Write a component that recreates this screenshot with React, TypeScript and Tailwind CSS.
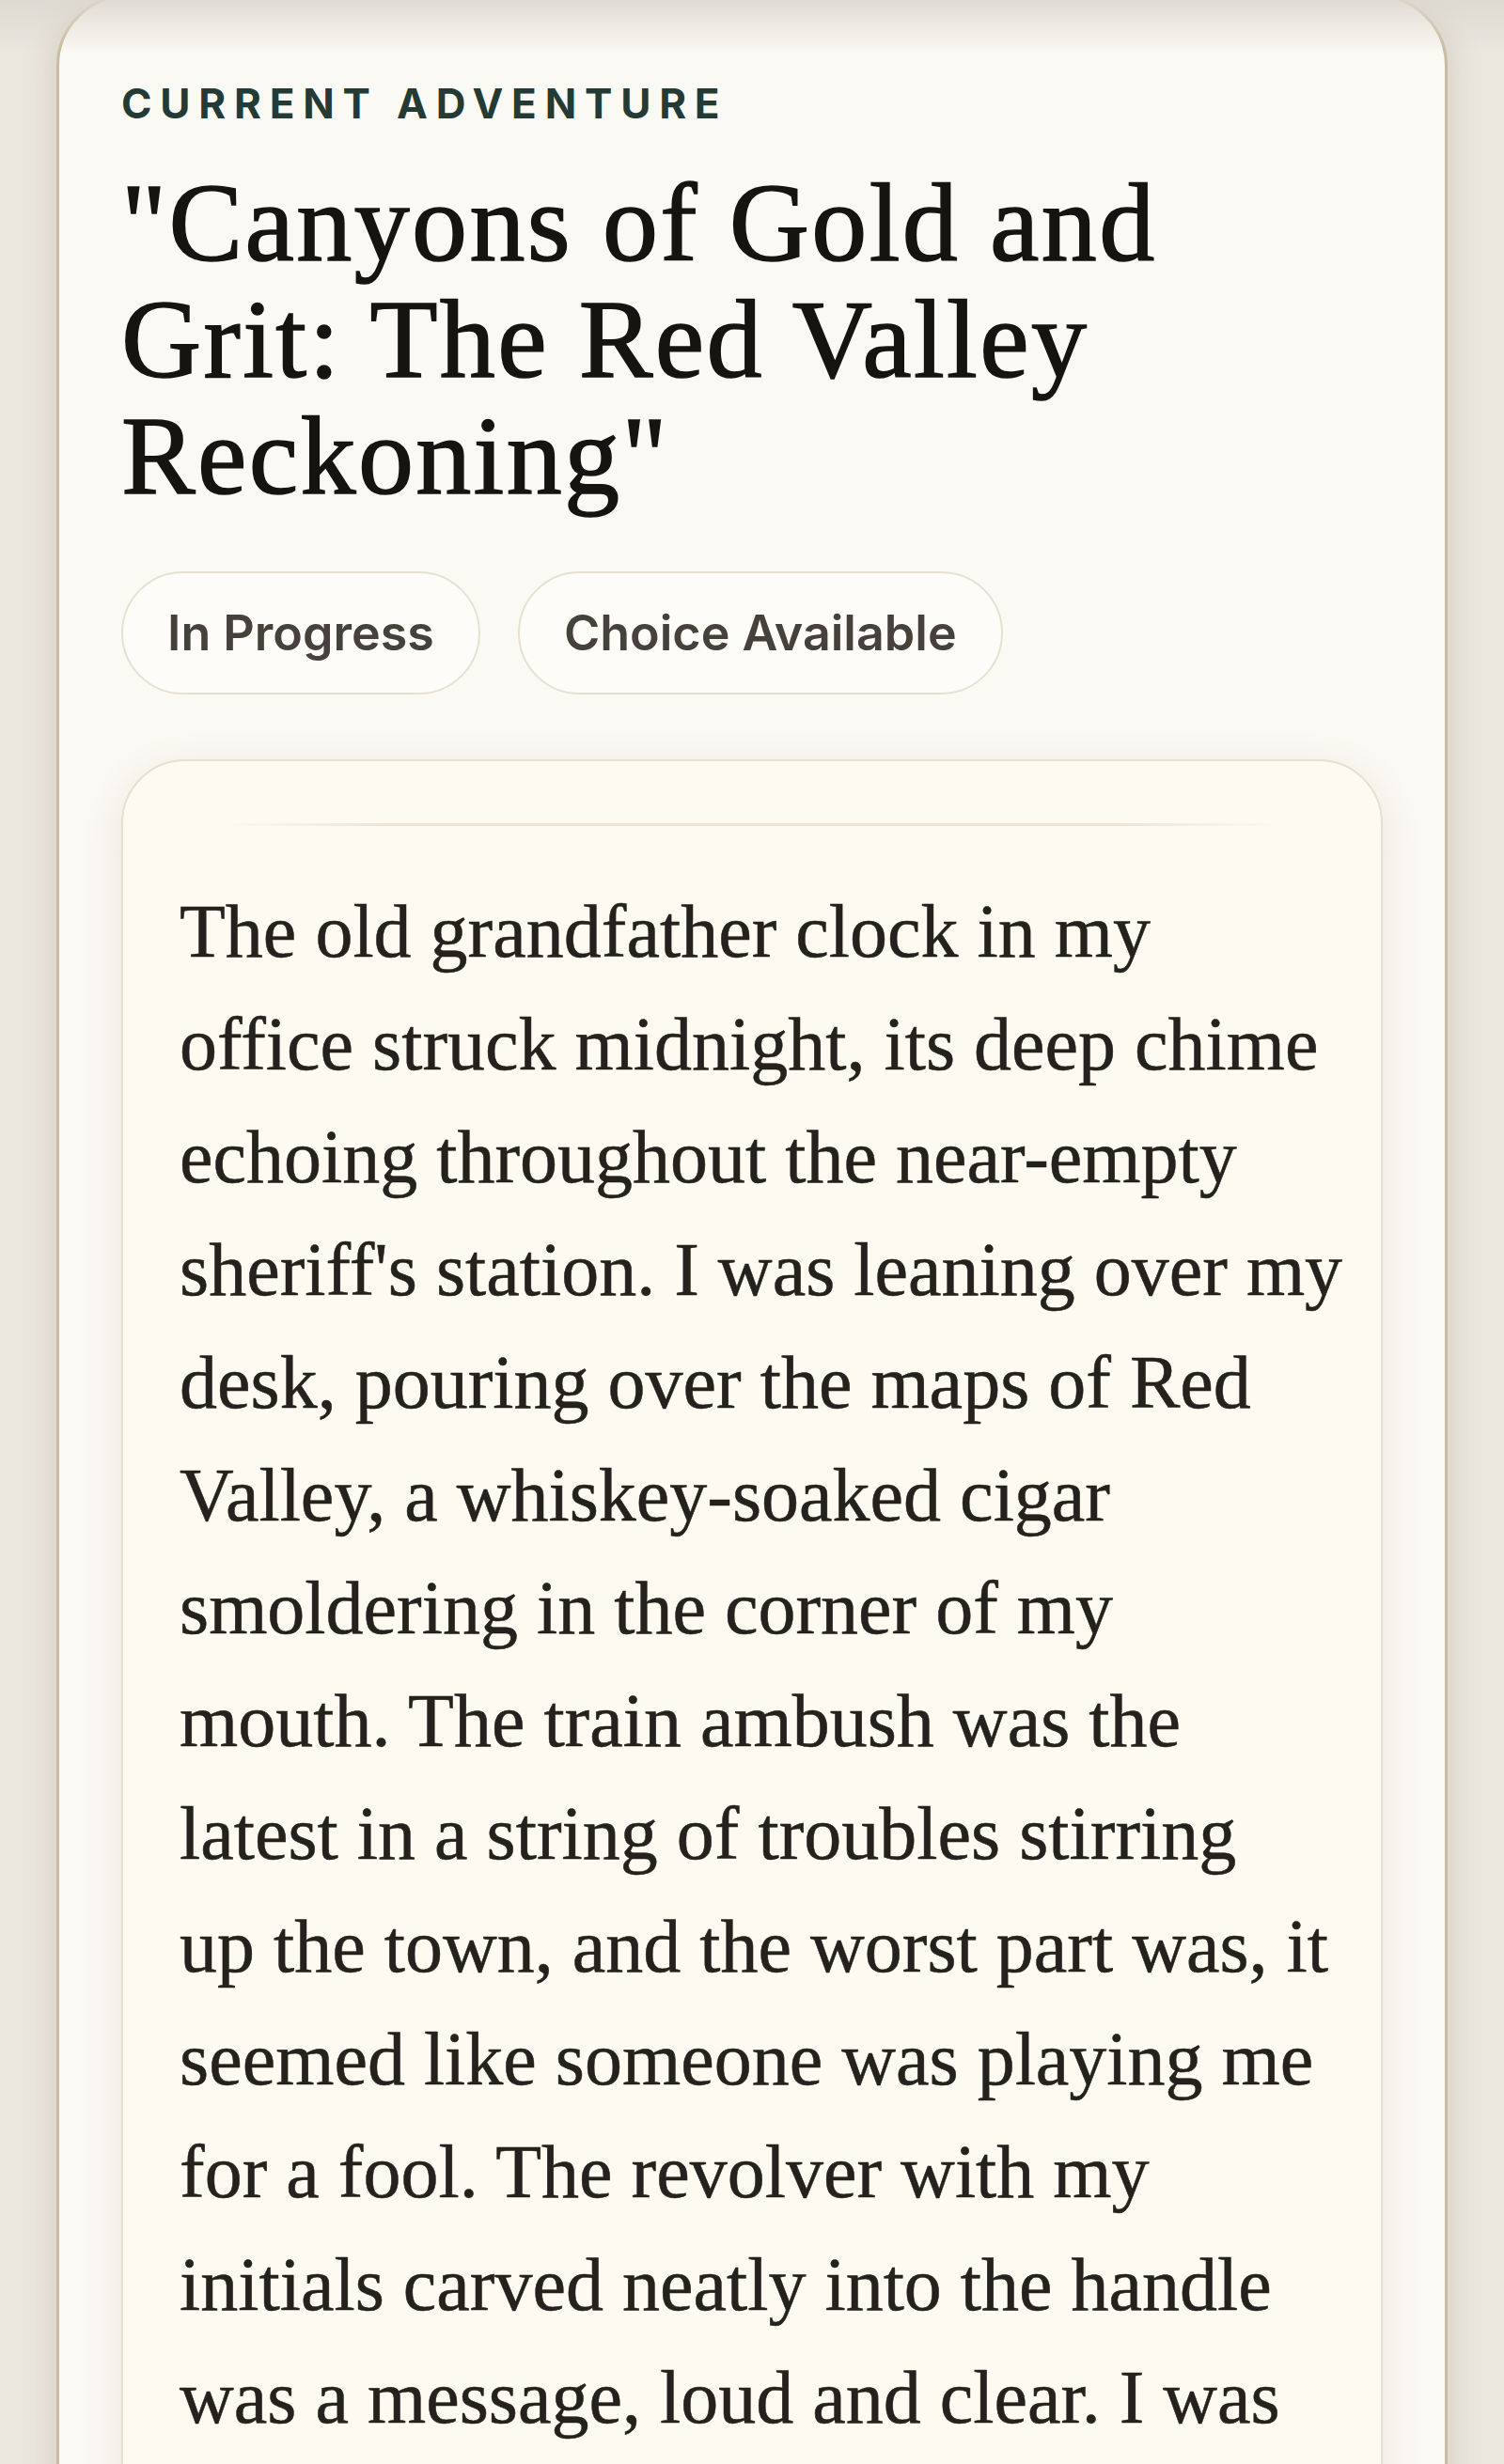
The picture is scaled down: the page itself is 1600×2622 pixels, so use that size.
const tags = ['In Progress', 'Choice Available'];

// story text, one entry per printed line
const storyLines = [
  'The old grandfather clock in my',
  'office struck midnight, its deep chime',
  'echoing throughout the near-empty',
  "sheriff's station. I was leaning over my",
  'desk, pouring over the maps of Red',
  'Valley, a whiskey-soaked cigar',
  'smoldering in the corner of my',
  'mouth. The train ambush was the',
  'latest in a string of troubles stirring',
  'up the town, and the worst part was, it',
  'seemed like someone was playing me',
  'for a fool. The revolver with my',
  'initials carved neatly into the handle',
  'was a message, loud and clear. I was',
];

export default function App() {
  return (
    <div className="relative min-h-screen overflow-hidden bg-[#ebe7df] px-[60px]">
      {/* soft shade under the (off-screen) header */}
      <div className="pointer-events-none fixed inset-x-0 top-0 z-10 h-[56px] bg-linear-to-b from-[#dcd8d0]/90 to-transparent" />

      <main className="-mt-[6px] rounded-[76px] border-[3px] border-[#cbbc9f] bg-[#fbf9f3] px-[66px] pt-[91px] pb-[120px] shadow-[0_0_36px_rgba(120,100,70,0.22)]">
        <p className="font-['Inter',sans-serif] text-[44px] leading-[44px] font-bold tracking-[0.2em] text-[#243b35] uppercase">
          Current Adventure
        </p>
        <h1 className="mt-[44px] max-w-[1200px] font-['Liberation_Serif',serif] text-[118px] leading-[124px] tracking-[0.02em] text-[#16140f] [-webkit-text-stroke:1.5px_#16140f]">
          "Canyons of Gold and Grit: The Red Valley Reckoning"
        </h1>

        <div className="mt-[60px] flex gap-[40px]">
          {tags.map((tag) => (
            <span
              key={tag}
              className="flex h-[131px] items-center rounded-full border-2 border-[#e7e0d2] bg-[#fdfcf8] px-[47px] font-['Inter',sans-serif] text-[52px] font-semibold text-[#46413a]"
            >
              {tag}
            </span>
          ))}
        </div>

        <article className="mt-[69px] rounded-[68px] border-2 border-[#e7dfcf] bg-[#fcfaf1] px-[60px] pt-[66px] pb-[140px] shadow-[0_12px_44px_rgba(110,90,60,0.12)]">
          <div className="mx-auto h-[3px] w-[1120px] bg-[linear-gradient(90deg,transparent,#ece5d6_15%,#ece5d6_85%,transparent)]" />
          <p className="mt-[52px] font-['Liberation_Serif',serif] text-[80px] leading-[120px] text-[#25211c] [-webkit-text-stroke:0.5px_#25211c]">
            {storyLines.map((line, i) => (
              <span key={i} className="block whitespace-nowrap">
                {line}
              </span>
            ))}
          </p>
        </article>
      </main>
    </div>
  );
}
